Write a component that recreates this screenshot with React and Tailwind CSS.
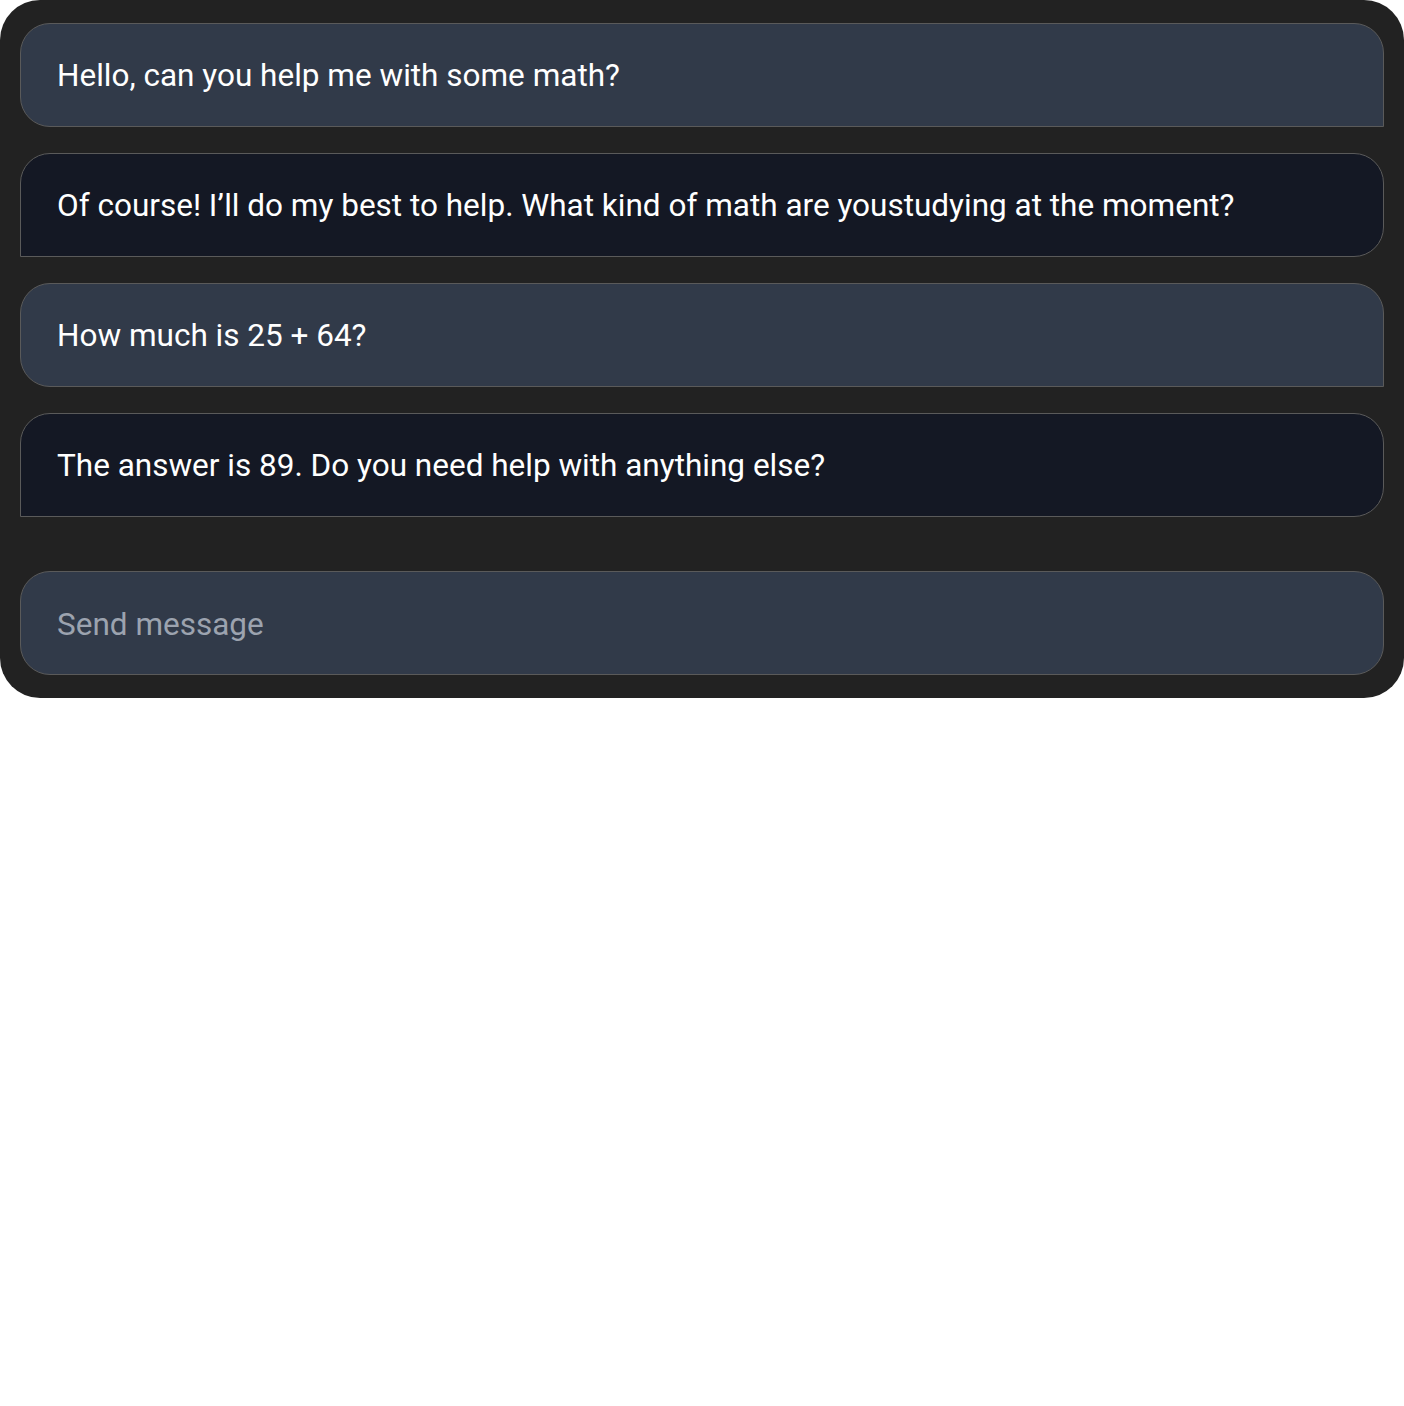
import { useState } from 'react';

const messages = [
  { from: 'user', text: 'Hello, can you help me with some math?' },
  { from: 'bot', text: 'Of course! I’ll do my best to help. What kind of math are youstudying at the moment?' },
  { from: 'user', text: 'How much is 25 + 64?' },
  { from: 'bot', text: 'The answer is 89. Do you need help with anything else?' },
];

function Bubble({ from, text }) {
  const shape =
    from === 'user'
      ? 'bg-[#313a49] rounded-t-[30px] rounded-bl-[30px]'
      : 'bg-[#141824] rounded-t-[30px] rounded-br-[30px]';
  return (
    <div className={`${shape} border border-[#5a5a5a] h-[104px] px-[36px] pt-[2px] flex items-center text-white text-[31.5px]`}>
      {text}
    </div>
  );
}

export default function App() {
  const [draft, setDraft] = useState('');

  return (
    <div className="w-[1404px] bg-[#222222] rounded-[40px] px-5 pt-[23px] pb-[23px] flex flex-col" style={{ fontFamily: 'Roboto, "Liberation Sans", sans-serif' }}>
      <div className="flex flex-col gap-[26px]">
        {messages.map((m, i) => (
          <Bubble key={i} {...m} />
        ))}
      </div>

      <input
        value={draft}
        onChange={(e) => setDraft(e.target.value)}
        placeholder="Send message"
        className="mt-[54px] h-[104px] bg-[#313a49] border border-[#5a5a5a] rounded-[30px] px-[36px] pt-[2px] text-white text-[31.5px] placeholder:text-[#9ca3af] outline-none"
      />
    </div>
  );
}
